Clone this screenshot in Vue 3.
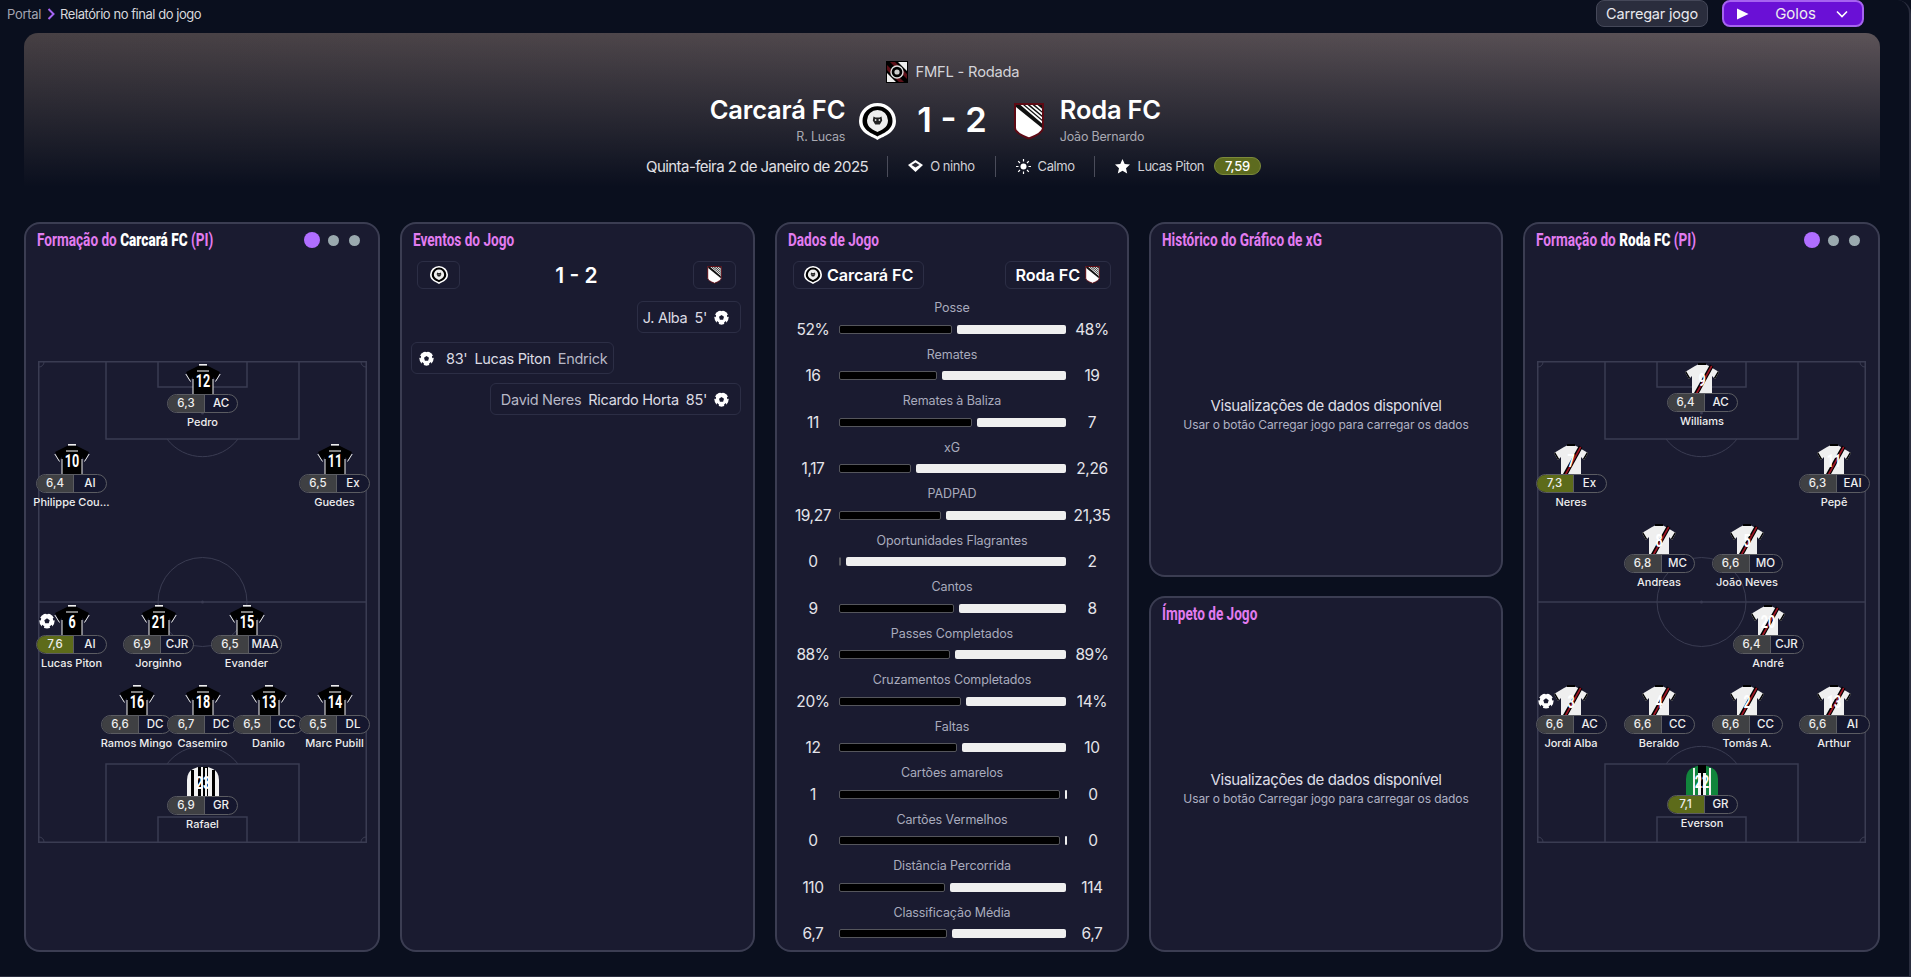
<script setup>
const homePlayers = [
  { name: 'Pedro', num: 12, rating: '6,3', pos: 'AC', x: 164, y: 33 },
  { name: 'Philippe Cou...', num: 10, rating: '6,4', pos: 'AI', x: 33, y: 113 },
  { name: 'Guedes', num: 11, rating: '6,5', pos: 'Ex', x: 296, y: 113 },
  { name: 'Lucas Piton', num: 6, rating: '7,6', pos: 'AI', x: 33, y: 274, good: true, goal: true },
  { name: 'Jorginho', num: 21, rating: '6,9', pos: 'CJR', x: 120, y: 274 },
  { name: 'Evander', num: 15, rating: '6,5', pos: 'MAA', x: 208, y: 274 },
  { name: 'Ramos Mingo', num: 16, rating: '6,6', pos: 'DC', x: 98, y: 354 },
  { name: 'Casemiro', num: 18, rating: '6,7', pos: 'DC', x: 164, y: 354 },
  { name: 'Danilo', num: 13, rating: '6,5', pos: 'CC', x: 230, y: 354 },
  { name: 'Marc Pubill', num: 14, rating: '6,5', pos: 'DL', x: 296, y: 354 },
  { name: 'Rafael', num: 23, rating: '6,9', pos: 'GR', x: 164, y: 435, gk: true }
]

const awayPlayers = [
  { name: 'Williams', num: 9, rating: '6,4', pos: 'AC', x: 164, y: 32 },
  { name: 'Neres', num: 7, rating: '7,3', pos: 'Ex', x: 33, y: 113, good: true },
  { name: 'Pepê', num: 11, rating: '6,3', pos: 'EAI', x: 296, y: 113 },
  { name: 'Andreas', num: 8, rating: '6,8', pos: 'MC', x: 121, y: 193 },
  { name: 'João Neves', num: 5, rating: '6,6', pos: 'MO', x: 209, y: 193 },
  { name: 'André', num: 20, rating: '6,4', pos: 'CJR', x: 230, y: 274 },
  { name: 'Jordi Alba', num: 3, rating: '6,6', pos: 'AC', x: 33, y: 354, goal: true },
  { name: 'Beraldo', num: 4, rating: '6,6', pos: 'CC', x: 121, y: 354 },
  { name: 'Tomás A.', num: 2, rating: '6,6', pos: 'CC', x: 209, y: 354 },
  { name: 'Arthur', num: 13, rating: '6,6', pos: 'AI', x: 296, y: 354 },
  { name: 'Everson', num: 22, rating: '7,1', pos: 'GR', x: 164, y: 434, gk: true, good: true }
]

const teams = [
  { side: 'home', name: 'Carcará FC', players: homePlayers },
  { side: 'away', name: 'Roda FC', players: awayPlayers }
]

// left = width of the black bar in px, the white bar takes what is left
const stats = [
  { label: 'Posse', a: '52%', b: '48%', left: 113 },
  { label: 'Remates', a: '16', b: '19', left: 98 },
  { label: 'Remates à Baliza', a: '11', b: '7', left: 133 },
  { label: 'xG', a: '1,17', b: '2,26', left: 72 },
  { label: 'PADPAD', a: '19,27', b: '21,35', left: 102 },
  { label: 'Oportunidades Flagrantes', a: '0', b: '2', left: 2 },
  { label: 'Cantos', a: '9', b: '8', left: 115 },
  { label: 'Passes Completados', a: '88%', b: '89%', left: 111 },
  { label: 'Cruzamentos Completados', a: '20%', b: '14%', left: 122 },
  { label: 'Faltas', a: '12', b: '10', left: 118 },
  { label: 'Cartões amarelos', a: '1', b: '0', left: 221 },
  { label: 'Cartões Vermelhos', a: '0', b: '0', left: 221 },
  { label: 'Distância Percorrida', a: '110', b: '114', left: 106 },
  { label: 'Classificação Média', a: '6,7', b: '6,7', left: 108 }
]

const shirtFor = (side, p) => {
  if (side === 'home') return p.gk ? '#shirt-home-gk' : '#shirt-home'
  return p.gk ? '#shirt-away-gk' : '#shirt-away'
}
</script>

<template>
  <div class="page">
    <!-- shared drawings -->
    <svg class="defs" width="0" height="0" aria-hidden="true">
      <defs>
        <symbol id="crest-home" viewBox="0 0 37 37">
          <path d="M18.5 37 C15 34 0 31 0 18 A18.5 18 0 0 1 37 18 C37 31 22 34 18.5 37 Z" fill="#fff" />
          <path d="M18.5 33.5 C15 31 3.5 28 3.5 18 A15 14.7 0 0 1 33.5 18 C33.5 28 22 31 18.5 33.5 Z" fill="#000" />
          <path d="M18.5 29 C15 27 8 25 8 17.5 A10.5 10.5 0 0 1 29 17.5 C29 25 22 27 18.5 29 Z" fill="#eee" />
          <path d="M14.5 13.5 L16.5 14.5 H20.5 L22.5 13.5 L23.2 17.5 L20.8 21.5 H16.2 L13.8 17.5 Z" fill="#222" />
          <circle cx="16.6" cy="17" r="0.9" fill="#ddd" />
          <circle cx="20.4" cy="17" r="0.9" fill="#ddd" />
        </symbol>
        <symbol id="crest-away" viewBox="0 0 30 37">
          <path d="M1 1 H29 V25 Q29 30 15 35.5 Q1 30 1 25 Z" fill="#fff" stroke="#5d0a14" stroke-width="2" />
          <path d="M2 2 H28 V25 L2 4 Z" fill="#111" />
          <path d="M6.5 2 H9 L28 18 V20.5 Z M11 2 H13.5 L28 14 V16.5 Z M16 2 H18.5 L28 9.8 V12.3 Z M21 2 H23.5 L28 5.7 V8.2 Z" fill="#fff" />
          <path d="M1 36.6 H29" stroke="#222" stroke-width="0.8" />
        </symbol>
        <symbol id="crest-league" viewBox="0 0 22 22">
          <rect width="22" height="22" fill="#000" />
          <path d="M1 12 L10 21 H1 Z M12 1 H21 V10 Z" fill="#eee" />
          <path d="M1 4 L18 21 H13 L1 9 Z M4 1 H9 L21 13 V18 Z" fill="#5c1018" />
          <circle cx="11" cy="11" r="6" fill="#000" stroke="#ddd" stroke-width="1.4" />
          <circle cx="11" cy="11" r="2.6" fill="#ccc" />
        </symbol>
        <symbol id="ball" viewBox="0 0 16 16">
          <circle cx="8" cy="8" r="7.6" fill="#fff" />
          <path d="M8 5.2 L10.7 7.2 L9.7 10.3 H6.3 L5.3 7.2 Z" fill="#1a1b30" />
          <path d="M6 0 L8 1.4 L10 0 Z M16 4.5 L13.8 5.2 L14.2 7.6 L16 7 Z M13.8 14 L12.6 11.8 L10.6 13.6 L11.4 16 Z M4.6 16 L5.4 13.6 L3.4 11.8 L2.2 14 Z M0 7 L1.8 7.6 L2.2 5.2 L0 4.5 Z" fill="#1a1b30" />
        </symbol>
        <symbol id="shirt-home" viewBox="0 0 36 30">
          <path d="M11 3 L14 1.5 H22 L25 3 L35 8 L31 16 L28 13 V30 H8 V13 L5 16 L1 8 Z" fill="#000" />
          <rect x="14" y="0" width="8" height="1.6" fill="#eee" />
          <rect x="12" y="6" width="12" height="2" fill="#7d7d7d" />
          <path d="M.8 10 L5.5 17.5 M35.2 10 L30.5 17.5 M8 15 V30 M28 15 V30" stroke="#eee" stroke-width="1" fill="none" />
        </symbol>
        <symbol id="shirt-home-gk" viewBox="0 0 36 30">
          <path d="M8 3 L13 1 H23 L28 3 Q34 6 34 14 V30 H2 V14 Q2 6 8 3 Z" fill="#f2f2f2" />
          <path d="M13 1 H23 V30 H13 Z M6 4 H9 V30 H6 Z M27 4 H30 V30 H27 Z" fill="#000" />
          <path d="M16 1 H18 V30 H16 Z M20 2 H22 V30 H20 Z" fill="#f2f2f2" />
        </symbol>
        <symbol id="shirt-away" viewBox="0 0 36 30">
          <path d="M11 3 L14 1.5 H22 L25 3 L35 9 L31 16 L28 13 V30 H8 V13 L5 16 L1 9 Z" fill="#efefef" />
          <path d="M1 9 L5 16 L6.2 15 L2.2 8.2 Z M35 9 L31 16 L29.8 15 L33.8 8.2 Z" fill="#000" />
          <rect x="14" y="0" width="8" height="2" fill="#000" />
          <path d="M26 1.5 L29.5 3.8 L15 30 H10 Z" fill="#000" />
          <path d="M27 2.5 L28.4 3.6 L13.8 30 H11.8 Z" fill="#9c1524" />
        </symbol>
        <symbol id="shirt-away-gk" viewBox="0 0 36 30">
          <path d="M8 3 L13 1 H23 L28 3 Q34 6 34 14 V30 H2 V14 Q2 6 8 3 Z" fill="#11853c" />
          <path d="M14 1 H22 V30 H14 Z M9 3 H11 V30 H9 Z M25 3 H27 V30 H25 Z" fill="#f2f2f2" />
          <path d="M14 0 H22 V8 H14 Z M17 8 H19 V30 H17 Z" fill="#000" />
        </symbol>
      </defs>
    </svg>

    <header class="topbar">
      <nav class="crumbs">
        <span class="crumb-root">Portal</span>
        <svg class="crumb-sep" width="8" height="12" viewBox="0 0 8 12">
          <path d="M1.5 1 L6.5 6 L1.5 11" fill="none" stroke="#a565f2" stroke-width="2" />
        </svg>
        <span class="crumb-now">Relatório no final do jogo</span>
      </nav>
      <div class="actions">
        <button class="btn-load" type="button">Carregar jogo</button>
        <button class="btn-play" type="button">
          <svg width="13" height="12" viewBox="0 0 13 12"><path d="M1 0.5 L12.5 6 L1 11.5 Z" fill="#fff" /></svg>
          <span class="btn-play-label">Golos</span>
          <svg width="12" height="8" viewBox="0 0 12 8"><path d="M1 1.5 L6 6.5 L11 1.5" fill="none" stroke="#fff" stroke-width="1.6" /></svg>
        </button>
      </div>
    </header>

    <section class="hero">
      <div class="league">
        <svg width="22" height="22"><use href="#crest-league" /></svg>
        <span>FMFL - Rodada</span>
      </div>
      <div class="scoreline">
        <div class="team team-home">
          <div class="team-text">
            <div class="team-name">Carcará FC</div>
            <div class="coach">R. Lucas</div>
          </div>
          <svg class="crest" width="37" height="37"><use href="#crest-home" /></svg>
        </div>
        <div class="score">1 - 2</div>
        <div class="team team-away">
          <svg class="crest" width="30" height="37"><use href="#crest-away" /></svg>
          <div class="team-text">
            <div class="team-name">Roda FC</div>
            <div class="coach">João Bernardo</div>
          </div>
        </div>
      </div>
      <div class="meta">
        <span class="meta-date">Quinta-feira 2 de Janeiro de 2025</span>
        <span class="meta-item">
          <svg width="15" height="12" viewBox="0 0 15 12">
            <path d="M7.5 0 L15 5 L7.5 12 L0 5 Z" fill="#fff" />
            <path d="M3.5 5 L7.5 2.5 L11.5 5 L7.5 7.5 Z" fill="#2a2a35" />
          </svg>
          O ninho
        </span>
        <span class="meta-item">
          <svg width="15" height="15" viewBox="0 0 15 15">
            <circle cx="7.5" cy="7.5" r="3" fill="#fff" />
            <path d="M7.5 0 V2.5 M7.5 12.5 V15 M0 7.5 H2.5 M12.5 7.5 H15 M2.2 2.2 L4 4 M11 11 L12.8 12.8 M2.2 12.8 L4 11 M11 4 L12.8 2.2" stroke="#fff" stroke-width="1.2" />
          </svg>
          Calmo
        </span>
        <span class="meta-item">
          <svg width="15" height="15" viewBox="0 0 15 15">
            <path d="M7.5 0 L9.7 5 L15 5.6 L11 9.2 L12.2 14.6 L7.5 11.8 L2.8 14.6 L4 9.2 L0 5.6 L5.3 5 Z" fill="#fff" />
          </svg>
          Lucas Piton
          <span class="motm">7,59</span>
        </span>
      </div>
    </section>

    <main class="board">
      <section
        v-for="team in teams"
        :key="team.side"
        class="panel"
        :class="team.side === 'home' ? 'col-1' : 'col-5'"
      >
        <div class="panel-head">
          <h2 class="panel-title">Formação do <b>{{ team.name }}</b> (PI)</h2>
          <div class="dots">
            <i class="dot dot-on"></i>
            <i class="dot"></i>
            <i class="dot"></i>
          </div>
        </div>
        <div class="pitch">
          <svg class="pitch-lines" width="329" height="482" viewBox="0 0 329 482">
            <g fill="none" stroke="#3a3c52" stroke-width="1.5">
              <rect x="0.75" y="0.75" width="327.5" height="480.5" />
              <path d="M.75 241 H328" />
              <circle cx="164.5" cy="241" r="44.5" stroke-width="1" />
              <path d="M68 1 V78 H261 V1 M120 1 V26 H209 V1" />
              <path d="M129 78 A44.5 44.5 0 0 0 200 78" stroke-width="1" />
              <path d="M68 481 V403 H261 V481 M120 481 V456 H209 V481" />
              <path d="M129 403 A44.5 44.5 0 0 1 200 403" stroke-width="1" />
              <path d="M1 6 A5 5 0 0 0 6 1 M323 1 A5 5 0 0 0 328 6 M1 476 A5 5 0 0 1 6 481 M323 481 A5 5 0 0 1 328 476" stroke-width="1" />
            </g>
            <circle cx="164.5" cy="241" r="1.5" fill="#3a3c52" />
            <circle cx="164.5" cy="52" r="1.5" fill="#3a3c52" />
            <circle cx="164.5" cy="430" r="1.5" fill="#3a3c52" />
          </svg>
          <div
            v-for="p in team.players"
            :key="p.name"
            class="player"
            :style="{ left: p.x + 'px', top: p.y - 30 + 'px' }"
          >
            <svg class="shirt" width="36" height="30" viewBox="0 0 36 30">
              <use :href="shirtFor(team.side, p)" width="36" height="30" />
              <text class="shirt-num" x="18" y="23" text-anchor="middle">{{ p.num }}</text>
            </svg>
            <svg v-if="p.goal" class="goal" width="16" height="16"><use href="#ball" /></svg>
            <div class="pill">
              <span class="pill-rate" :class="{ good: p.good }">{{ p.rating }}</span>
              <span class="pill-pos">{{ p.pos }}</span>
            </div>
            <div class="player-name">{{ p.name }}</div>
          </div>
        </div>
      </section>

      <section class="panel col-2">
        <div class="panel-head">
          <h2 class="panel-title">Eventos do Jogo</h2>
        </div>
        <div class="events-top">
          <span class="crest-box"><svg width="18" height="18"><use href="#crest-home" /></svg></span>
          <span class="events-score">1 - 2</span>
          <span class="crest-box"><svg width="15" height="18"><use href="#crest-away" /></svg></span>
        </div>
        <div class="events">
          <div class="event event-away">
            <span>J. Alba</span><span>5'</span>
            <svg width="15" height="15"><use href="#ball" /></svg>
          </div>
          <div class="event event-home">
            <svg class="ball-lead" width="15" height="15"><use href="#ball" /></svg>
            <span>83'</span><span>Lucas Piton</span><span class="assist">Endrick</span>
          </div>
          <div class="event event-away event-long">
            <span class="assist">David Neres</span><span>Ricardo Horta</span><span>85'</span>
            <svg width="15" height="15"><use href="#ball" /></svg>
          </div>
        </div>
      </section>

      <section class="panel col-3">
        <div class="panel-head">
          <h2 class="panel-title">Dados de Jogo</h2>
        </div>
        <div class="stat-teams">
          <span class="crest-box wide"><svg width="18" height="18"><use href="#crest-home" /></svg>Carcará FC</span>
          <span class="crest-box wide">Roda FC<svg width="15" height="18"><use href="#crest-away" /></svg></span>
        </div>
        <div class="stats">
          <div v-for="s in stats" :key="s.label" class="stat">
            <div class="stat-label">{{ s.label }}</div>
            <div class="stat-row">
              <span class="stat-val">{{ s.a }}</span>
              <div class="bars">
                <i class="bar bar-black" :style="{ width: s.left + 'px' }"></i>
                <i class="bar bar-white"></i>
              </div>
              <span class="stat-val">{{ s.b }}</span>
            </div>
          </div>
        </div>
      </section>

      <div class="col-4">
        <section class="panel">
          <div class="panel-head">
            <h2 class="panel-title">Histórico do Gráfico de xG</h2>
          </div>
          <div class="empty">
            <p class="empty-main">Visualizações de dados disponível</p>
            <p class="empty-sub">Usar o botão Carregar jogo para carregar os dados</p>
          </div>
        </section>
        <section class="panel">
          <div class="panel-head">
            <h2 class="panel-title">Ímpeto de Jogo</h2>
          </div>
          <div class="empty">
            <p class="empty-main">Visualizações de dados disponível</p>
            <p class="empty-sub">Usar o botão Carregar jogo para carregar os dados</p>
          </div>
        </section>
      </div>
    </main>
  </div>
</template>

<style>
html,
body {
  margin: 0;
  background: #0a0f1e;
}
</style>

<style scoped>
.page {
  box-sizing: border-box;
  width: 1911px;
  height: 977px;
  overflow: hidden;
  padding: 0 29px 0 24px;
  background: #0a0f1e;
  border-right: 2px solid #2a2d3e;
  border-bottom: 1px solid #2a2d3e;
  border-radius: 0 14px 0 0;
  color: #fff;
  font-family: Inter, "Noto Sans", sans-serif;
}

.defs {
  position: absolute;
}

.topbar {
  display: flex;
  justify-content: space-between;
  height: 33px;
  margin-left: -17px;
}

.crumbs {
  display: flex;
  align-items: center;
  gap: 6px;
  height: 27px;
  font-size: 13px;
  letter-spacing: -0.3px;
}

.crumb-root {
  color: #a3a5b2;
}

.crumb-now {
  margin-left: -1px;
  color: #d8d8dc;
  letter-spacing: -0.45px;
}

.actions {
  display: flex;
  gap: 14px;
  margin-right: 16px;
  height: 27px;
}

.btn-load {
  width: 112px;
  padding: 0;
  border: 1px solid #454859;
  border-radius: 8px;
  background: #2a2d3d;
  color: #e8e8ee;
  font: 400 14.5px Inter, sans-serif;
  letter-spacing: -0.2px;
}

.btn-play {
  display: flex;
  align-items: center;
  justify-content: space-between;
  box-sizing: border-box;
  width: 142px;
  padding: 0 14px 0 12px;
  border: 2px solid #a663f0;
  border-radius: 8px;
  background: #6a10d6;
  color: #eee;
  font: 400 15px Inter, sans-serif;
}

.btn-play-label {
  margin-left: 6px;
}

.hero {
  box-sizing: border-box;
  height: 167px;
  padding-top: 28px;
  border-radius: 14px 14px 0 0;
  background:
    linear-gradient(180deg, rgba(10, 15, 30, 0) 0%, #0a0f1e 92%),
    linear-gradient(90deg, #474044 0%, #5c5358 100%);
}

.league {
  display: flex;
  align-items: center;
  justify-content: center;
  gap: 8px;
  height: 22px;
  margin-left: 1px;
  color: #d4d4da;
  font-size: 14.7px;
  letter-spacing: -0.2px;
}

.scoreline {
  display: grid;
  grid-template-columns: 1fr auto 1fr;
  align-items: center;
  height: 38px;
  margin-top: 14px;
}

.team {
  display: flex;
  align-items: center;
}

.team-home {
  justify-content: flex-end;
  gap: 14px;
  padding-right: 21px;
  text-align: right;
}

.team-away {
  gap: 16px;
  padding-left: 27px;
}

.team-name {
  margin-top: -2px;
  font-size: 25.5px;
  font-weight: 600;
  line-height: 30px;
  letter-spacing: -0.2px;
}

.coach {
  margin-top: 3px;
  color: #a9a9b2;
  font-size: 12.5px;
  line-height: 17px;
  letter-spacing: -0.2px;
}

.score {
  margin-top: -3px;
  font-size: 34.5px;
  font-weight: 600;
  line-height: 38px;
  white-space: nowrap;
}

.meta {
  display: flex;
  align-items: center;
  justify-content: center;
  height: 22px;
  margin-top: 20px;
  margin-left: 3px;
  color: #d0d0d6;
  font-size: 13px;
  letter-spacing: -0.45px;
}

.meta-date {
  padding-right: 19px;
  color: #e0e0e4;
  font-size: 15px;
  letter-spacing: -0.55px;
}

.meta-item {
  display: flex;
  align-items: center;
  gap: 7px;
  height: 21px;
  padding: 0 20px;
  border-left: 1px solid #4a4c5a;
}

.meta-item:last-child {
  padding-right: 0;
}

.motm {
  box-sizing: border-box;
  width: 47px;
  height: 18px;
  margin-left: 3px;
  border: 1px solid #7c8a3a;
  border-radius: 9px;
  background: #5d6b1f;
  color: #fff;
  font-size: 13px;
  font-weight: 500;
  line-height: 16px;
  letter-spacing: -0.2px;
  text-align: center;
}

.board {
  display: grid;
  grid-template-columns: 356px 355px 354px 354px 357px;
  gap: 20px;
  height: 730px;
  margin-top: 22px;
}

.panel {
  box-sizing: border-box;
  display: flex;
  flex-direction: column;
  min-height: 0;
  border: 2px solid #3b3d52;
  border-radius: 16px;
  background: #1a1b30;
}

.col-1 {
  grid-column: 1;
  grid-row: 1;
}

.col-2 {
  grid-column: 2;
  grid-row: 1;
}

.col-3 {
  grid-column: 3;
  grid-row: 1;
}

.col-4 {
  grid-column: 4;
  grid-row: 1;
  display: grid;
  grid-template-rows: 355px 356px;
  gap: 19px;
  min-height: 0;
}

.col-5 {
  grid-column: 5;
  grid-row: 1;
}

.panel-head {
  display: flex;
  align-items: center;
  justify-content: space-between;
  flex: none;
  height: 32px;
  padding: 0 18px 0 11px;
}

.panel-title {
  margin: 0;
  color: #e27cf0;
  font-family: Roboto, sans-serif;
  font-size: 18.5px;
  font-weight: 700;
  white-space: nowrap;
  transform: scaleX(0.735);
  transform-origin: left center;
}

.panel-title b {
  color: #fff;
}

.dots {
  display: flex;
  align-items: center;
  gap: 10px;
}

.dot {
  display: block;
  width: 11px;
  height: 11px;
  border-radius: 50%;
  background: #9aa9ae;
}

.dot-on {
  width: 16px;
  height: 16px;
  margin-right: -2px;
  background: #b06eff;
}

.pitch {
  position: relative;
  flex: none;
  width: 329px;
  height: 482px;
  margin: 105px auto 0;
}

.pitch-lines {
  position: absolute;
  inset: 0;
}

.player {
  position: absolute;
  display: flex;
  flex-direction: column;
  align-items: center;
  width: 72px;
  transform: translateX(calc(-50% + 1px));
}

.shirt {
  display: block;
}

.shirt-num {
  fill: #fff;
  font-family: Roboto, sans-serif;
  font-size: 18px;
  font-weight: 700;
  transform: scaleX(0.7);
  transform-box: fill-box;
  transform-origin: center;
}

.goal {
  position: absolute;
  top: 8px;
  left: 3px;
}

.pill {
  box-sizing: border-box;
  display: flex;
  width: 71px;
  height: 19px;
  overflow: hidden;
  border: 1.5px solid #5b5c62;
  border-radius: 10px;
  background: #15172e;
  font-size: 11.5px;
  font-weight: 500;
  line-height: 16px;
  text-align: center;
}

.pill-rate {
  flex: 0 0 36px;
  background: #3f4043;
  border-right: 1px solid #5b5c62;
  color: #eee;
}

.pill-rate.good {
  background: #5d6b1a;
}

.pill-pos {
  flex: 1;
  color: #eee;
}

.player-name {
  margin-top: 2px;
  color: #eee;
  font-size: 11px;
  font-weight: 500;
  line-height: 14px;
  white-space: nowrap;
}

.events-top {
  display: flex;
  align-items: center;
  justify-content: space-between;
  padding: 5px 17px 0 15px;
}

.events-score {
  font-size: 21px;
  font-weight: 600;
}

.crest-box {
  box-sizing: border-box;
  display: inline-flex;
  align-items: center;
  justify-content: center;
  gap: 5px;
  width: 43px;
  height: 28px;
  border: 1px solid #2c2e45;
  border-radius: 6px;
}

.crest-box.wide {
  width: auto;
  padding: 0 10px;
  font-size: 16.2px;
  font-weight: 600;
  letter-spacing: -0.1px;
}

.events {
  display: flex;
  flex-direction: column;
  gap: 9px;
  padding: 12px 12px 0 9px;
}

.event {
  box-sizing: border-box;
  display: flex;
  align-items: center;
  gap: 7px;
  height: 32px;
  padding: 0 11px 0 5px;
  border: 1px solid #2c2e45;
  border-radius: 6px;
  color: #dcdce4;
  font-size: 14.5px;
  letter-spacing: -0.3px;
}

.event-long {
  padding-left: 10px;
}

.event-away {
  align-self: flex-end;
}

.event-home {
  align-self: flex-start;
  padding: 0 6px;
}

.ball-lead {
  margin: 0 5px 0 1px;
}

.assist {
  color: #b7b8c6;
}

.stat-teams {
  display: flex;
  justify-content: space-between;
  padding: 5px 16px 0 16px;
}

.stats {
  display: flex;
  flex-direction: column;
  gap: 3.5px;
  padding-top: 10px;
}

.stat-label {
  padding-top: 1px;
  color: #a9abbd;
  font-size: 12.5px;
  line-height: 16px;
  text-align: center;
  letter-spacing: -0.1px;
}

.stat-row {
  display: flex;
  align-items: center;
  height: 26px;
  padding: 0 10px 0 11px;
}

.stat-val {
  flex: 0 0 50px;
  color: #e4e4ea;
  font-size: 15.5px;
  text-align: center;
  letter-spacing: -0.4px;
}

.bars {
  display: flex;
  flex: 1;
  gap: 5px;
  margin: 0 1px;
}

.bar {
  display: block;
  box-sizing: border-box;
  height: 9px;
  border-radius: 2px;
}

.bar-black {
  flex: none;
  background: #000;
  border: 1px solid #55565c;
}

.bar-white {
  flex: 1;
  min-width: 2px;
  background: #efefef;
}

.empty {
  display: flex;
  flex: 1;
  flex-direction: column;
  align-items: center;
  justify-content: center;
  gap: 2px;
  padding-bottom: 4px;
}

.empty p {
  margin: 0;
}

.empty-main {
  color: #dedee6;
  font-size: 15px;
  letter-spacing: -0.38px;
}

.empty-sub {
  color: #b0b2c4;
  font-size: 12px;
  letter-spacing: -0.1px;
}
</style>
